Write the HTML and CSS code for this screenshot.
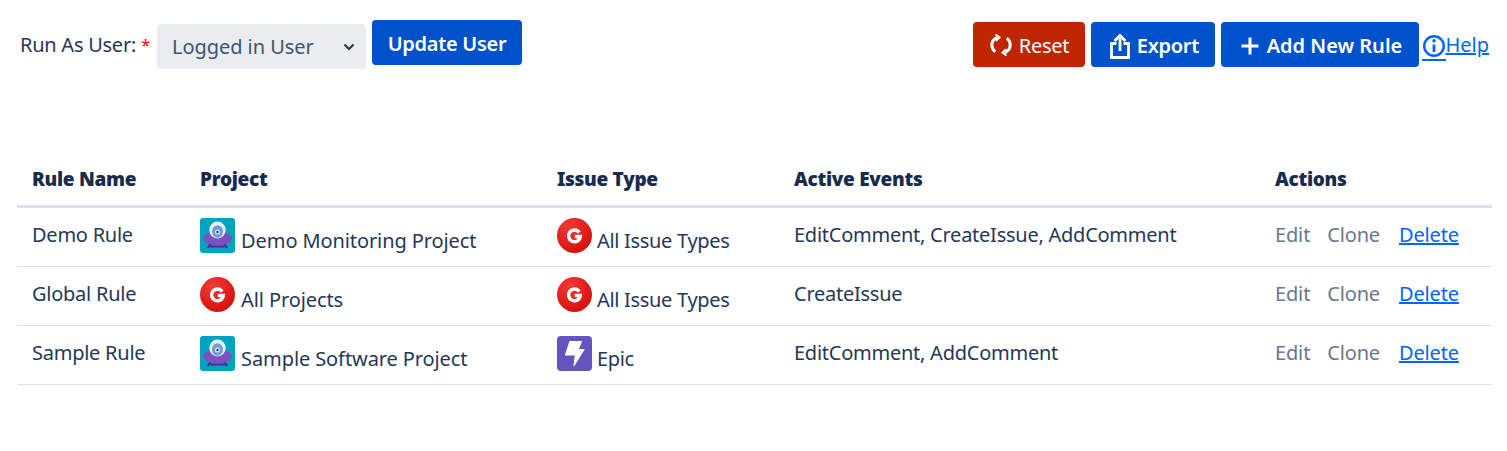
FILE: index.html
```html
<!DOCTYPE html>
<html lang="en">
<head>
<meta charset="utf-8">
<title>Rules</title>
<link rel="stylesheet" href="styles.css">
</head>
<body>
<div class="toolbar">
  <div class="user-form">
    <label class="user-label">Run As User: <span class="req">*</span></label>
    <div class="select"><span>Logged in User</span>
      <svg class="chev" width="12" height="8" viewBox="0 0 12 8"><path d="M1.500 1.500 6 6l4.500-4.500" fill="none" stroke="#253858" stroke-width="2.200"/></svg>
    </div>
    <button class="btn btn-update">Update User</button>
  </div>
  <div class="actions">
    <button class="btn btn-reset">
      <svg width="26" height="26" viewBox="0 0 26 26" fill="none" stroke="#fff" stroke-width="3"><path d="M9.500 5.500C5.500 7 3.800 9.800 3.800 13c0 2.800 1.200 5 3.400 6.800"/><path d="M7.500 2.500 11.500 5.300 8 8.800" stroke-width="2"/><path d="M16.500 20.500c4-1.500 5.700-4.300 5.700-7.500 0-2.800-1.200-5-3.400-6.800"/><path d="M18.500 23.500 14.500 20.700 18 17.200" stroke-width="2"/></svg>
      Reset</button>
    <button class="btn btn-blue btn-export">
      <svg width="24" height="28" viewBox="0 0 24 28" fill="none" stroke="#fff" stroke-width="2.800"><path d="M8.500 11.500H3.500v14h17v-14h-5"/><path d="M12 19V4"/><path d="M6.500 9 12 3.500 17.500 9"/></svg>
      Export</button>
    <button class="btn btn-blue btn-add">
      <svg width="24" height="24" viewBox="0 0 24 24" fill="none" stroke="#fff" stroke-width="3"><path d="M12 3.500v17M3.500 12h17"/></svg>
      Add New Rule</button>
    <a class="help" href="#"><span class="help-icon"><svg width="24" height="24" viewBox="0 0 24 24" fill="none" stroke="#0065ff" stroke-width="2.400"><circle cx="12" cy="12" r="9.800"/><path d="M12 10.500v7.500" stroke-width="2.800"/><circle cx="12" cy="6.800" r="1.700" fill="#0065ff" stroke="none"/></svg></span><span class="help-text">Help</span></a>
  </div>
</div>
<table class="rules">
  <colgroup><col class="c1"><col class="c2"><col class="c3"><col class="c4"><col class="c5"></colgroup>
  <thead>
    <tr><th>Rule Name</th><th>Project</th><th>Issue Type</th><th>Active Events</th><th>Actions</th></tr>
  </thead>
  <tbody>
    <tr>
      <td>Demo Rule</td>
      <td class="project"><svg class="ico" viewBox="0 0 35 35"><use href="#ufo"/></svg> Demo Monitoring Project</td>
      <td class="issue"><svg class="ico" viewBox="0 0 35 35"><use href="#gi"/></svg> All Issue Types</td>
      <td>EditComment, CreateIssue, AddComment</td>
      <td class="act"><span class="muted">Edit</span><span class="muted">Clone</span><a href="#">Delete</a></td>
    </tr>
    <tr>
      <td>Global Rule</td>
      <td class="project"><svg class="ico" viewBox="0 0 35 35"><use href="#gi"/></svg> All Projects</td>
      <td class="issue"><svg class="ico" viewBox="0 0 35 35"><use href="#gi"/></svg> All Issue Types</td>
      <td>CreateIssue</td>
      <td class="act"><span class="muted">Edit</span><span class="muted">Clone</span><a href="#">Delete</a></td>
    </tr>
    <tr>
      <td>Sample Rule</td>
      <td class="project"><svg class="ico" viewBox="0 0 35 35"><use href="#ufo"/></svg> Sample Software Project</td>
      <td class="issue"><svg class="ico" viewBox="0 0 35 35"><use href="#epic"/></svg> Epic</td>
      <td>EditComment, AddComment</td>
      <td class="act"><span class="muted">Edit</span><span class="muted">Clone</span><a href="#">Delete</a></td>
    </tr>
  </tbody>
</table>
<svg class="defs" width="0" height="0">
  <defs>
    <radialGradient id="red" cx="35%" cy="25%" r="85%"><stop offset="0" stop-color="#f23a35"/><stop offset="1" stop-color="#d40c08"/></radialGradient>
    <symbol id="ufo" viewBox="0 0 35 35">
      <rect width="35" height="35" rx="3" fill="#00a3bf"/>
      <path d="M8 30c.5-2 1.500-3 3-4M27 30c-.5-2-1.500-3-3-4M10 28.500h15" fill="none" stroke="#403294" stroke-width="2"/>
      <ellipse cx="17.500" cy="20.500" rx="14.200" ry="7.200" fill="#7f4fc0"/>
      <ellipse cx="17.500" cy="12" rx="8.200" ry="8.500" fill="#e9f2fb"/>
      <ellipse cx="17.500" cy="13.500" rx="5.500" ry="6.200" fill="#6f9bdc"/>
      <circle cx="17.500" cy="14" r="2.500" fill="#dfe9f7"/>
      <circle cx="17.500" cy="14" r="1.200" fill="#253858"/>
    </symbol>
    <symbol id="gi" viewBox="0 0 35 35">
      <circle cx="17.500" cy="17.500" r="17.500" fill="url(#red)"/>
      <path d="M22.300 14.500A5.900 5.900 0 1 0 23.300 18.500h-5.500" fill="none" stroke="#fff" stroke-width="3.400"/>
    </symbol>
    <symbol id="epic" viewBox="0 0 35 35">
      <rect width="35" height="35" rx="4" fill="#6554c0"/>
      <path d="M13 5.500h11.500l-3.500 8h6L17 29.500l1.500-10.500H8.500z" fill="#fff" stroke="#fff" stroke-width="1.200" stroke-linejoin="round"/>
    </symbol>
  </defs>
</svg>
</body>
</html>
```
FILE: styles.css
```css
* { box-sizing: border-box; }
body {
  margin: 0;
  padding: 20px 15px 0 17px;
  font-family: "Noto Sans", "Open Sans", sans-serif;
  font-size: 20px;
  color: #172b4d;
  background: #fff;
}
.toolbar {
  display: flex;
  justify-content: space-between;
  align-items: flex-start;
  height: 127px;
}
.user-form {
  display: flex;
  align-items: flex-start;
  padding-left: 3px;
}
.user-label {
  width: 137px;
  margin-top: 11px;
  line-height: 28px;
  color: #253858;
  letter-spacing: -0.25px;
  white-space: nowrap;
}
.req {
  color: #f00;
  font-size: 17px;
  vertical-align: 1px;
}
.select {
  display: flex;
  align-items: center;
  justify-content: space-between;
  width: 209px;
  height: 45px;
  margin-top: 4px;
  margin-right: 6px;
  padding: 0 11px 0 15px;
  border-radius: 4px;
  background: #ebecf0;
  color: #42526e;
  letter-spacing: -0.05px;
}
.btn {
  display: inline-flex;
  align-items: center;
  justify-content: center;
  height: 45px;
  border: 0;
  border-radius: 4px;
  padding-top: 2px;
  font: 600 20px "Noto Sans", "Open Sans", sans-serif;
  letter-spacing: -0.3px;
  color: #fff;
  gap: 5px;
}
.btn-update {
  width: 150px;
  padding-top: 3px;
  background: #0052cc;
}
.actions {
  display: flex;
  align-items: flex-start;
  gap: 6px;
  margin-top: 2px;
  margin-right: 3px;
}
.btn-reset {
  width: 112px;
  padding-right: 8px;
  background: #bf2600;
  font-weight: 400;
}
.btn-blue { padding: 2px 0 0; background: #0052cc; }
.btn-export { width: 124px; }
.btn-add { width: 198px; letter-spacing: 0; padding-right: 1px; }
.help {
  display: flex;
  align-items: flex-start;
  margin-left: -4px;
  color: #0065ff;
  text-decoration: none;
}
.help-icon {
  display: block;
  height: 39px;
  margin: 0 -1px 0 1px;
  padding-top: 12px;
  border-bottom: 2px solid #0065ff;
}
.help-icon svg { display: block; }
.help-text {
  margin-top: 9px;
  line-height: 28px;
  text-decoration: underline;
}
.rules {
  width: 1475px;
  border-collapse: separate;
  border-spacing: 0;
  table-layout: fixed;
}
.c1 { width: 168px; }
.c2 { width: 357px; }
.c3 { width: 237px; }
.c4 { width: 481px; }
.c5 { width: 232px; }
.rules th {
  height: 61px;
  padding: 6px 15px 0;
  text-align: left;
  font-weight: 900;
  font-size: 19px;
  letter-spacing: -0.3px;
  color: #172b4d;
  border-bottom: 3px solid #dfe1e6;
}
.rules td {
  height: 59px;
  padding: 0 15px 5px;
  border-bottom: 1px solid #dfe1e6;
  color: #253858;
  line-height: 28px;
  letter-spacing: -0.25px;
  white-space: nowrap;
}
.rules .project { letter-spacing: -0.1px; }
.rules .project .ico { margin-right: 1px; }
.rules .issue { letter-spacing: -0.3px; }
.ico {
  width: 35px;
  height: 35px;
  vertical-align: -5px;
  margin-top: 4px;
}
.rules .act { letter-spacing: -0.15px; }
.act span, .act a { margin-right: 17px; }
.act .muted + .muted { margin-right: 19px; }
.muted { color: #6b778c; }
.act a { color: #0065ff; }
.defs { position: absolute; }
```
